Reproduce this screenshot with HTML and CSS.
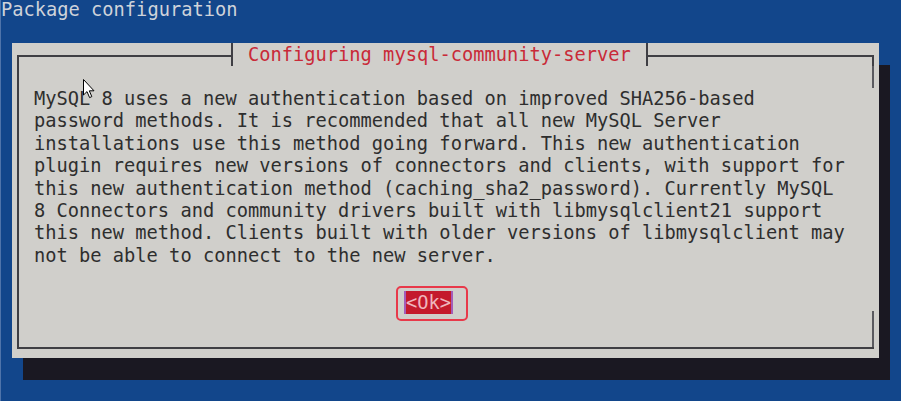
FILE: index.html
```html
<!DOCTYPE html>
<html lang="en">
<head>
<meta charset="utf-8">
<title>Package configuration</title>
<link rel="stylesheet" href="styles.css">
</head>
<body>
<div class="screen">
  <div class="backtitle">Package configuration</div>
  <div class="dialog">
    <div class="titlebar">
      <div class="corner-l"></div>
      <div class="title">Configuring mysql-community-server</div>
      <div class="corner-r"></div>
    </div>
    <div class="frame">
      <div class="message">MySQL 8 uses a new authentication based on improved SHA256-based
password methods. It is recommended that all new MySQL Server
installations use this method going forward. This new authentication
plugin requires new versions of connectors and clients, with support for
this new authentication method (caching_sha2_password). Currently MySQL
8 Connectors and community drivers built with libmysqlclient21 support
this new method. Clients built with older versions of libmysqlclient may
not be able to connect to the new server.</div>
      <div class="actions">
        <div class="ok-ring"><span class="ok">&lt;Ok&gt;</span></div>
      </div>
    </div>
  </div>
  <svg class="cursor" width="12" height="20" viewBox="0 0 12 20">
    <path d="M0.5 0.5 L0.5 16 L4 12.6 L6.6 18.6 L8.8 17.6 L6.3 11.8 L11 11.8 Z" fill="#ffffff" stroke="#000000" stroke-width="1" stroke-linejoin="miter"/>
  </svg>
</div>
</body>
</html>
```
FILE: styles.css
```css
html, body {
  margin: 0;
  padding: 0;
}

body {
  background: #12468b;
  font-family: "DejaVu Sans Mono", "Liberation Mono", monospace;
  font-size: 18.72px;
}

.screen {
  position: relative;
  height: 401px;
  overflow: hidden;
  background: #12468b;
  border-left: 1px solid #4f74aa;
  box-sizing: border-box;
}

.backtitle {
  color: #cfd3da;
  line-height: 19px;
  height: 19px;
  white-space: pre;
}

.dialog {
  margin: 24px 0 0 11px;
  width: 867px;
  box-sizing: border-box;
  padding: 0 5px 9px 5px;
  background: #d0cfcb;
  box-shadow: 11px 22px 0 #1a1822;
}

.titlebar {
  display: flex;
  height: 23px;
}

.corner-l {
  width: 214px;
  box-sizing: border-box;
  margin-top: 12px;
  border-top: 2px solid #3f3f44;
  border-left: 2px solid #3f3f44;
}

.title {
  border-left: 2px solid #3f3f44;
  border-right: 2px solid #3f3f44;
  padding: 0 15px;
  line-height: 23px;
  color: #c92a38;
  white-space: pre;
}

.corner-r {
  flex: 1;
  margin-top: 12px;
  border-top: 2px solid #3f3f44;
  border-right: 2px solid #3f3f44;
}

.frame {
  border-left: 2px solid #3f3f44;
  border-bottom: 2px solid #3f3f44;
  padding: 22px 0 26px 15px;
  background-image: linear-gradient(#5a5a60, #5a5a60), linear-gradient(#5a5a60, #5a5a60);
  background-size: 2px 22px, 2px 36px;
  background-position: right top, right bottom;
  background-repeat: no-repeat;
}

.message {
  white-space: pre;
  line-height: 22.4px;
  color: #2e2e2e;
}

.actions {
  display: flex;
  margin-top: 18.8px;
  padding-left: 362px;
}

.ok-ring {
  display: flex;
  border: 2px solid #e8394a;
  border-radius: 5px;
  padding: 3px 13px 5px 6px;
}

.ok {
  display: block;
  background: #c41a2c;
  color: #efb6bd;
  border-left: 2px solid #a45cb8;
  border-right: 2px solid #a45cb8;
  line-height: 23px;
  height: 23px;
  white-space: pre;
}

.cursor {
  position: absolute;
  left: 82px;
  top: 79px;
}
```
